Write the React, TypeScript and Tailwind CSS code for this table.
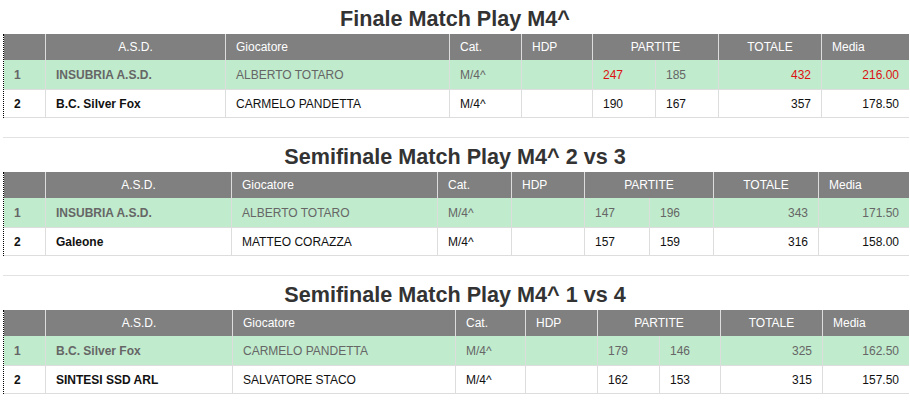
type Row = {
  pos: string;
  asd: string;
  player: string;
  cat: string;
  g1: string;
  g2: string;
  tot: string;
  avg: string;
  red?: { g1?: boolean; g2?: boolean; tot?: boolean; avg?: boolean };
};

type Match = { title: string; cols: string; rows: Row[] };

const matches: Match[] = [
  {
    title: "Finale Match Play M4^",
    cols: "grid-cols-[41px_180px_224px_72px_71px_63px_63px_103px_1fr]",
    rows: [
      { pos: "1", asd: "INSUBRIA A.S.D.", player: "ALBERTO TOTARO", cat: "M/4^", g1: "247", g2: "185", tot: "432", avg: "216.00", red: { g1: true, tot: true, avg: true } },
      { pos: "2", asd: "B.C. Silver Fox", player: "CARMELO PANDETTA", cat: "M/4^", g1: "190", g2: "167", tot: "357", avg: "178.50" },
    ],
  },
  {
    title: "Semifinale Match Play M4^ 2 vs 3",
    cols: "grid-cols-[41px_186px_206px_74px_73px_65px_64px_105px_1fr]",
    rows: [
      { pos: "1", asd: "INSUBRIA A.S.D.", player: "ALBERTO TOTARO", cat: "M/4^", g1: "147", g2: "196", tot: "343", avg: "171.50" },
      { pos: "2", asd: "Galeone", player: "MATTEO CORAZZA", cat: "M/4^", g1: "157", g2: "159", tot: "316", avg: "158.00" },
    ],
  },
  {
    title: "Semifinale Match Play M4^ 1 vs 4",
    cols: "grid-cols-[41px_187px_223px_70px_72px_62px_61px_102px_1fr]",
    rows: [
      { pos: "1", asd: "B.C. Silver Fox", player: "CARMELO PANDETTA", cat: "M/4^", g1: "179", g2: "146", tot: "325", avg: "162.50" },
      { pos: "2", asd: "SINTESI SSD ARL", player: "SALVATORE STACO", cat: "M/4^", g1: "162", g2: "153", tot: "315", avg: "157.50" },
    ],
  },
];

const cell = "flex items-center px-[10px] border-l border-[#ddd]";

function MatchTable({ m }: { m: Match }) {
  return (
    <div className="ml-[3px] w-[906px] border-l border-dotted border-black text-[12px]">
      {/* header */}
      <div className={`grid ${m.cols} h-[26px] bg-[#808080] text-white`}>
        <div className="flex items-center px-[10px]" />
        <div className={`${cell} justify-center`}>A.S.D.</div>
        <div className={cell}>Giocatore</div>
        <div className={cell}>Cat.</div>
        <div className={cell}>HDP</div>
        <div className={`${cell} col-span-2 justify-center`}>PARTITE</div>
        <div className={`${cell} justify-center`}>TOTALE</div>
        <div className={cell}>Media</div>
      </div>

      {m.rows.map((r, i) => {
        const first = i === 0;
        const base = first ? "text-[#666]" : "text-[#111]";
        const red = (on?: boolean) => (on ? "text-[#d11]" : base);
        return (
          <div
            key={i}
            className={`grid ${m.cols} h-[29px] ${first ? "bg-[#c0ebcd]" : "bg-white border-t border-b border-[#ddd]"}`}
          >
            <div className={`flex items-center px-[10px] font-bold ${base}`}>{r.pos}</div>
            <div className={`${cell} font-bold ${base}`}>{r.asd}</div>
            <div className={`${cell} ${base}`}>{r.player}</div>
            <div className={`${cell} ${base}`}>{r.cat}</div>
            <div className={cell} />
            <div className={`${cell} ${red(r.red?.g1)}`}>{r.g1}</div>
            <div className={`${cell} ${red(r.red?.g2)}`}>{r.g2}</div>
            <div className={`${cell} justify-end ${red(r.red?.tot)}`}>{r.tot}</div>
            <div className={`${cell} justify-end ${red(r.red?.avg)}`}>{r.avg}</div>
          </div>
        );
      })}
    </div>
  );
}

export default function App() {
  return (
    <div className="w-[910px] h-[400px] bg-white overflow-hidden font-['Liberation_Sans',Arial,sans-serif] text-[#333]">
      {matches.map((m, i) => (
        <div key={i}>
          {i > 0 && <div className="ml-[3px] w-[906px] mt-[19px] border-t border-[#e2e2e2]" />}
          <h2 className="pt-[6px] text-center font-bold text-[21.6px] leading-[26px] text-[#333]">
            {m.title}
          </h2>
          <div className="mt-[2px]">
            <MatchTable m={m} />
          </div>
        </div>
      ))}
    </div>
  );
}
